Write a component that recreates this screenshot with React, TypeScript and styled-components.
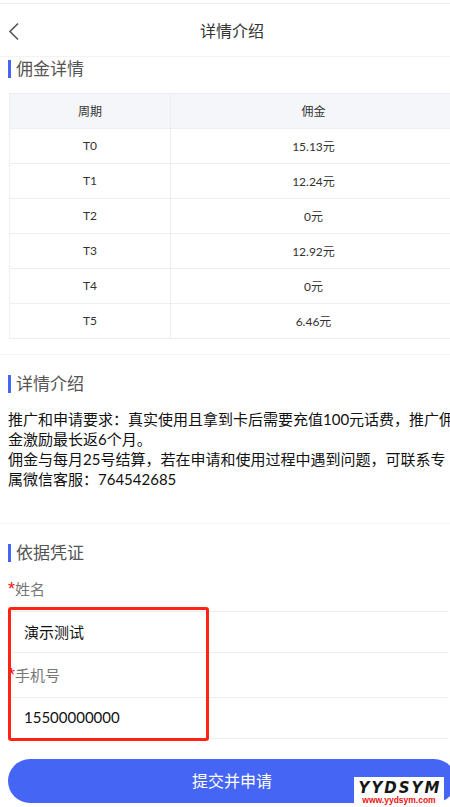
import React from "react";
import styled, { createGlobalStyle } from "styled-components";

const GlobalStyle = createGlobalStyle`
  html, body {
    margin: 0;
    padding: 0;
    background: #fff;
    overflow: hidden;
  }
  body {
    font-family: "Lato", "Noto Sans CJK SC", sans-serif;
  }
  #root {
    width: 450px;
    height: 807px;
    overflow: hidden;
  }
`;

const Page = styled.div`
  position: relative;
  width: 464px;
  padding-top: 3px;
`;

const Header = styled.header`
  height: 52px;
  border-top: 1px solid #eeeeee;
  border-bottom: 1px solid #f3f3f3;
  display: flex;
  align-items: center;
  justify-content: center;
  position: relative;
  font-size: 16px;
  color: #333;
`;

const BackIcon = styled.svg`
  position: absolute;
  left: 8px;
  top: 17px;
  width: 12px;
  height: 20px;
`;

const Section = styled.section<{ $last?: boolean }>`
  padding: 0 8px;
  border-bottom: ${(p) => (p.$last ? "none" : "1px solid #f3f3f3")};
`;

const SectionTitle = styled.h2<{ $top: number }>`
  margin: ${(p) => p.$top}px 0 0;
  height: 18px;
  line-height: 18px;
  border-left: 3px solid #4565f5;
  padding-left: 5px;
  font-size: 17px;
  font-weight: 400;
  color: #555;
`;

const Table = styled.table`
  margin: 15px 0 15px 1px;
  width: 448px;
  border-collapse: collapse;
  table-layout: fixed;
  font-size: 12px;
  color: #333;

  th, td {
    height: 32px;
    padding: 0 0 2px;
    border: 1px solid #eceef2;
    text-align: center;
    font-weight: 400;
  }
  th {
    background: #f5f6fa;
  }
  th:first-child {
    width: 160px;
  }
`;

const Paragraph = styled.p`
  margin: 16px 0 34px;
  font-size: 15px;
  line-height: 20px;
  color: #111;
`;

const Label = styled.div<{ $height: number }>`
  box-sizing: border-box;
  height: ${(p) => p.$height}px;
  padding-bottom: 12px;
  display: flex;
  align-items: flex-end;
  font-size: 15px;
  line-height: 20px;
  color: #777;
`;

const Star = styled.span`
  width: 7px;
  color: #f01010;
  font-size: 18px;
  font-family: "Liberation Sans", sans-serif;
`;

const InputRow = styled.div`
  box-sizing: border-box;
  margin-right: 8px;
  border-top: 1px solid #eeeeee;
  border-bottom: 1px solid #eeeeee;
  height: 42px;
  display: flex;
  align-items: center;
  padding: 0 0 2px 16px;
`;

const Input = styled.input`
  border: none;
  outline: none;
  padding: 0;
  width: 300px;
  background: transparent;
  font-family: inherit;
  font-size: 15px;
  color: #111;
`;

const SubmitButton = styled.button`
  display: block;
  margin-top: 20px;
  width: 448px;
  height: 44px;
  padding: 0 0 2px;
  border: none;
  border-radius: 22px;
  background: #4565f5;
  color: #fff;
  font-family: inherit;
  font-size: 16px;
`;

const RedMark = styled.div`
  position: absolute;
  left: 8px;
  top: 607px;
  width: 201px;
  height: 134px;
  box-sizing: border-box;
  border: 3px solid #ff2415;
  border-radius: 3px;
  pointer-events: none;
`;

const Watermark = styled.div`
  position: absolute;
  left: 354px;
  top: 777px;
  width: 90px;
  height: 26px;
  background: #fff;
  display: flex;
  flex-direction: column;
  align-items: center;
  font-weight: 700;
  line-height: 1;
`;

const WatermarkName = styled.span`
  margin: 4px -2px 0 0;
  font-family: "DejaVu Sans", sans-serif;
  font-size: 15px;
  font-style: italic;
  letter-spacing: 2px;
  color: #161616;
`;

const WatermarkUrl = styled.span`
  font-family: "Liberation Sans", sans-serif;
  font-size: 8.5px;
  color: #ee1111;
`;

const rows = [
  ["T0", "15.13元"],
  ["T1", "12.24元"],
  ["T2", "0元"],
  ["T3", "12.92元"],
  ["T4", "0元"],
  ["T5", "6.46元"],
];

export default function App() {
  return (
    <Page>
      <GlobalStyle />
      <Header>
        <BackIcon viewBox="0 0 12 20" fill="none">
          <path d="M10 2.5 L2 10.5 L10 18.5" stroke="#555" strokeWidth="1.6" />
        </BackIcon>
        详情介绍
      </Header>

      <Section>
        <SectionTitle $top={3}>佣金详情</SectionTitle>
        <Table>
          <thead>
            <tr>
              <th>周期</th>
              <th>佣金</th>
            </tr>
          </thead>
          <tbody>
            {rows.map(([period, amount]) => (
              <tr key={period}>
                <td>{period}</td>
                <td>{amount}</td>
              </tr>
            ))}
          </tbody>
        </Table>
      </Section>

      <Section>
        <SectionTitle $top={20}>详情介绍</SectionTitle>
        <Paragraph>
          推广和申请要求：真实使用且拿到卡后需要充值100元话费，推广佣金激励最长返6个月。
          <br />
          佣金与每月25号结算，若在申请和使用过程中遇到问题，可联系专属微信客服：764542685
        </Paragraph>
      </Section>

      <Section $last>
        <SectionTitle $top={20}>依据凭证</SectionTitle>
        <Label $height={49}>
          <Star>*</Star>姓名
        </Label>
        <InputRow>
          <Input defaultValue="演示测试" />
        </InputRow>
        <Label $height={44}>
          <Star>*</Star>手机号
        </Label>
        <InputRow>
          <Input defaultValue="15500000000" />
        </InputRow>
        <SubmitButton>提交并申请</SubmitButton>
      </Section>

      <RedMark />
      <Watermark>
        <WatermarkName>YYDSYM</WatermarkName>
        <WatermarkUrl>www.yydsym.com</WatermarkUrl>
      </Watermark>
    </Page>
  );
}
